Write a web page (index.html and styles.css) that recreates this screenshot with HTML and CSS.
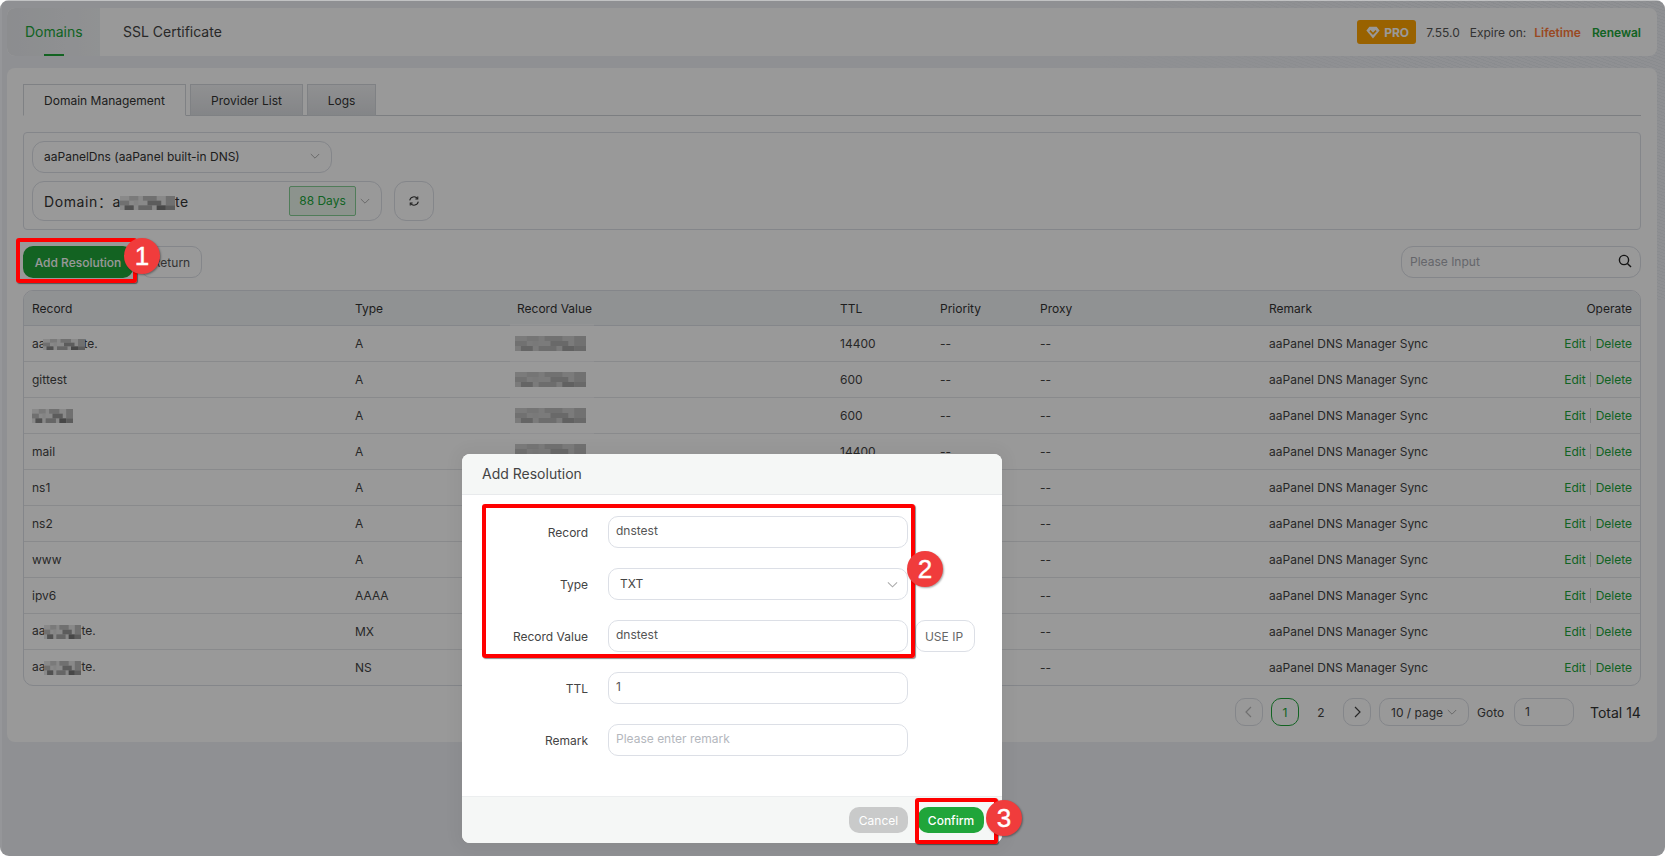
FILE: index.html
```html
<!DOCTYPE html>
<html lang="en">
<head>
<meta charset="utf-8">
<title>Domains</title>
<link rel="stylesheet" href="styles.css">
</head>
<body>
<svg class="defs" width="0" height="0" aria-hidden="true">
  <symbol id="mosaic" viewBox="0 0 12 3" preserveAspectRatio="none">
    <rect width="12" height="3" fill="#e4e4e4"/>
    <rect x="0" y="1" width="2" height="1" fill="#bbb"/><rect x="1" y="2" width="2" height="1" fill="#888"/>
    <rect x="2" y="0" width="2" height="1" fill="#ccc"/><rect x="4" y="2" width="3" height="1" fill="#aaa"/>
    <rect x="5" y="0" width="3" height="1" fill="#bbb"/><rect x="6" y="1" width="3" height="1" fill="#999"/>
    <rect x="8" y="2" width="2" height="1" fill="#777"/><rect x="10" y="0" width="2" height="2" fill="#bbb"/>
    <rect x="10" y="2" width="2" height="1" fill="#999"/><rect x="3" y="1" width="1" height="1" fill="#ddd"/>
  </symbol>
  <symbol id="chev" viewBox="0 0 12 12"><path d="M1 3.6 6 8.6 11 3.6" fill="none" stroke="currentColor" stroke-width="1.1"/></symbol>
</svg>

<div class="screen">
  <header class="topbar">
    <nav class="toptabs">
      <a class="toptab active">Domains</a>
      <a class="toptab">SSL Certificate</a>
    </nav>
    <div class="topinfo">
      <span class="pro">
        <svg width="14" height="13" viewBox="0 0 14 13"><path d="M3.4.8h7.2L13.6 4.4 7 12.4.4 4.4z" fill="#fff"/><path d="M3.9 4.6 7 7.8l3.1-3.2" fill="none" stroke="#ffa300" stroke-width="1.6"/></svg>
        PRO
      </span>
      <span class="ver">7.55.0</span>
      <span class="exp">Expire on:</span>
      <span class="life">Lifetime</span>
      <span class="renew">Renewal</span>
    </div>
  </header>

  <main class="card">
    <div class="tabs">
      <a class="tab active">Domain Management</a>
      <a class="tab">Provider List</a>
      <a class="tab">Logs</a>
    </div>

    <section class="filter">
      <div class="select provider"><span>aaPanelDns (aaPanel built-in DNS)</span><svg class="chev"><use href="#chev"/></svg></div>
      <div class="domrow">
        <div class="select domain">
          <span class="domtext">Domain：a<svg class="mos dommos"><use href="#mosaic"/></svg>te</span>
          <span class="days">88 Days</span>
          <svg class="chev"><use href="#chev"/></svg>
        </div>
        <button class="refresh" type="button">
          <svg width="12" height="12" viewBox="0 0 14 14" fill="none" stroke="#333" stroke-width="1.2"><path d="M2 6.2A5 5 0 0 1 11 4.2"/><path d="M12 7.8A5 5 0 0 1 3 9.8"/><path d="M11.4 1.8v2.8H8.6"/><path d="M2.6 12.2V9.4h2.8"/></svg>
        </button>
      </div>
    </section>

    <section class="toolbar">
      <div class="btns">
        <button class="btn primary" type="button">Add Resolution</button>
        <button class="btn ghost" type="button">Return</button>
      </div>
      <div class="search"><span>Please Input</span>
        <svg width="14" height="14" viewBox="0 0 14 14" fill="none" stroke="#222" stroke-width="1.4"><circle cx="6" cy="6" r="4.6"/><path d="M9.4 9.4 13 13"/></svg>
      </div>
    </section>

    <div class="tablewrap">
      <table class="records">
        <thead>
          <tr><th>Record</th><th>Type</th><th>Record Value</th><th>TTL</th><th>Priority</th><th>Proxy</th><th>Remark</th><th class="op">Operate</th></tr>
        </thead>
        <tbody>
          <tr><td>aa<svg class="mos m1"><use href="#mosaic"/></svg>te.</td><td>A</td><td><svg class="mos val"><use href="#mosaic"/></svg></td><td>14400</td><td>--</td><td>--</td><td>aaPanel DNS Manager Sync</td><td class="op"><a>Edit</a><i></i><a>Delete</a></td></tr>
          <tr><td>gittest</td><td>A</td><td><svg class="mos val"><use href="#mosaic"/></svg></td><td>600</td><td>--</td><td>--</td><td>aaPanel DNS Manager Sync</td><td class="op"><a>Edit</a><i></i><a>Delete</a></td></tr>
          <tr><td><svg class="mos m3"><use href="#mosaic"/></svg></td><td>A</td><td><svg class="mos val"><use href="#mosaic"/></svg></td><td>600</td><td>--</td><td>--</td><td>aaPanel DNS Manager Sync</td><td class="op"><a>Edit</a><i></i><a>Delete</a></td></tr>
          <tr><td>mail</td><td>A</td><td><svg class="mos val"><use href="#mosaic"/></svg></td><td>14400</td><td>--</td><td>--</td><td>aaPanel DNS Manager Sync</td><td class="op"><a>Edit</a><i></i><a>Delete</a></td></tr>
          <tr><td>ns1</td><td>A</td><td></td><td></td><td>--</td><td>--</td><td>aaPanel DNS Manager Sync</td><td class="op"><a>Edit</a><i></i><a>Delete</a></td></tr>
          <tr><td>ns2</td><td>A</td><td></td><td></td><td>--</td><td>--</td><td>aaPanel DNS Manager Sync</td><td class="op"><a>Edit</a><i></i><a>Delete</a></td></tr>
          <tr><td>www</td><td>A</td><td></td><td></td><td>--</td><td>--</td><td>aaPanel DNS Manager Sync</td><td class="op"><a>Edit</a><i></i><a>Delete</a></td></tr>
          <tr><td>ipv6</td><td>AAAA</td><td></td><td></td><td>--</td><td>--</td><td>aaPanel DNS Manager Sync</td><td class="op"><a>Edit</a><i></i><a>Delete</a></td></tr>
          <tr><td>aa<svg class="mos m9"><use href="#mosaic"/></svg>te.</td><td>MX</td><td></td><td></td><td>--</td><td>--</td><td>aaPanel DNS Manager Sync</td><td class="op"><a>Edit</a><i></i><a>Delete</a></td></tr>
          <tr><td>aa<svg class="mos m9"><use href="#mosaic"/></svg>te.</td><td>NS</td><td></td><td></td><td>--</td><td>--</td><td>aaPanel DNS Manager Sync</td><td class="op"><a>Edit</a><i></i><a>Delete</a></td></tr>
        </tbody>
      </table>
      <div class="valband"></div>
    </div>

    <footer class="pager">
      <span class="pg disabled"><svg width="10" height="12" viewBox="0 0 10 12" fill="none" stroke="currentColor" stroke-width="1.2"><path d="M7 1 2 6l5 5"/></svg></span>
      <span class="pg current">1</span>
      <span class="pg plain">2</span>
      <span class="pg"><svg width="10" height="12" viewBox="0 0 10 12" fill="none" stroke="currentColor" stroke-width="1.2"><path d="M3 1l5 5-5 5"/></svg></span>
      <span class="sizes">10 / page<svg class="chev"><use href="#chev"/></svg></span>
      <span class="goto">Goto</span>
      <span class="gotoin">1</span>
      <span class="total">Total 14</span>
    </footer>
  </main>

  <div class="overlay"></div>

  <div class="modal">
    <div class="m-head">Add Resolution</div>
    <div class="m-body">
      <div class="row"><label>Record</label><div class="input">dnstest</div></div>
      <div class="row"><label>Type</label><div class="input sel">TXT<svg class="chev"><use href="#chev"/></svg></div></div>
      <div class="row"><label>Record Value</label><div class="input">dnstest</div><button class="useip" type="button">USE IP</button></div>
      <div class="row"><label>TTL</label><div class="input">1</div></div>
      <div class="row"><label>Remark</label><div class="input ph">Please enter remark</div></div>
    </div>
    <div class="m-foot">
      <button class="btn cancel" type="button">Cancel</button>
      <button class="btn confirm" type="button">Confirm</button>
    </div>
  </div>

  <div class="mark mark1"></div>
  <div class="mark mark2"></div>
  <div class="mark mark3"></div>
  <div class="badge b1">1</div>
  <div class="badge b2">2</div>
  <div class="badge b3">3</div>
</div>
</body>
</html>
```

FILE: styles.css
```css
* { box-sizing: border-box; }
html, body { margin: 0; padding: 0; height: 856px; background: #fff; overflow: hidden; }
body { font-family: Inter, "Noto Sans CJK SC", sans-serif; font-size: 12px; color: #333; }
.defs { position: absolute; }

.screen {
  position: relative;
  width: 1665px;
  height: 856px;
  padding: 8px 8px 0 7px;
  border-radius: 9px;
  overflow: hidden;
  display: flex;
  flex-direction: column;
  gap: 12px;
  background:
    linear-gradient(90deg, #eff1f5 0, rgba(239, 241, 245, 0) 70%) right top / 620px 300px no-repeat,
    repeating-linear-gradient(20deg, #e6e9ee 0 1px, #eff1f5 1px 3px) right top / 620px 300px no-repeat,
    #eff1f5;
}

/* top bar */
.topbar {
  height: 48px;
  flex: none;
  background: #fff;
  border-radius: 8px;
  display: flex;
  justify-content: space-between;
  align-items: center;
  padding-right: 16px;
  overflow: hidden;
}
.toptabs { display: flex; height: 100%; }
.toptab {
  font-size: 14px;
  line-height: 48px;
  padding: 0 24px;
  color: #444;
  position: relative;
}
.toptab.active {
  color: #20a53a;
  background: linear-gradient(90deg, #e9ebef, #f1f3f5);
  padding: 0 17px 0 18px;
  width: 93px;
  border-radius: 8px 0 0 8px;
}
.toptab.active::after {
  content: "";
  position: absolute;
  left: 37px;
  bottom: 0;
  width: 20px;
  height: 2px;
  background: #20a53a;
}
.toptab:nth-child(2) { padding-left: 23px; }
.topinfo { display: flex; align-items: center; font-size: 12px; color: #555; }
.pro {
  display: flex;
  align-items: center;
  gap: 4px;
  width: 59px;
  height: 24px;
  padding-left: 9px;
  background: #ffa300;
  border-radius: 3px;
  color: #fff;
  font-weight: 700;
  margin-right: 10px;
}
.ver { margin-right: 10px; }
.exp { margin-right: 8px; }
.life { color: #ff7a3a; font-weight: 600; margin-right: 11px; }
.renew { color: #20a53a; font-weight: 600; }

/* card */
.card {
  width: 1650px;
  height: 674px;
  flex: none;
  background: #fff;
  border-radius: 8px;
  padding: 16px;
  display: flex;
  flex-direction: column;
}
.tabs { display: flex; height: 32px; gap: 4px; border-bottom: 1px solid #cfd2d8; flex: none; }
.tab {
  height: 32px;
  border: 1px solid #d4d7dd;
  line-height: 32px;
  text-align: center;
  background: linear-gradient(#f0f1f3, #dcdee2);
  color: #333;
}
.tab:nth-child(1) { width: 163px; background: #fff; border-bottom-color: #fff; }
.tab:nth-child(2) { width: 113px; }
.tab:nth-child(3) { width: 69px; }

.filter {
  margin-top: 16px;
  height: 98px;
  flex: none;
  border: 1px solid #dcdfe6;
  border-radius: 4px;
  padding: 8px;
  display: flex;
  flex-direction: column;
  gap: 8px;
}
.select {
  border: 1px solid #dcdfe6;
  border-radius: 12px;
  display: flex;
  align-items: center;
}
.provider { width: 300px; height: 32px; padding: 0 11px 2px; justify-content: space-between; }
.chev { width: 10px; height: 10px; color: #aaa; flex: none; }
.domrow { display: flex; gap: 12px; }
.domain { width: 350px; height: 40px; padding: 0 11px 0 11px; }
.domtext { font-size: 14px; letter-spacing: .6px; color: #333; flex: 1; white-space: nowrap; }
.mos { display: inline-block; vertical-align: middle; filter: blur(.5px); }
.dommos { width: 55px; height: 14px; margin-left: -1px; }
.days {
  width: 67px;
  height: 30px;
  line-height: 28px;
  text-align: center;
  border: 1px solid #86cf95;
  border-radius: 2px;
  background: #e9f6ec;
  color: #20a53a;
  margin-right: 4px;
}
.refresh {
  width: 40px;
  height: 40px;
  padding: 0;
  background: #fff;
  border: 1px solid #dcdfe6;
  border-radius: 12px;
  display: flex;
  align-items: center;
  justify-content: center;
}

.toolbar { margin-top: 16px; height: 32px; flex: none; display: flex; justify-content: space-between; }
.btns { display: flex; gap: 8px; }
.btn { font-family: inherit; font-size: 12px; border-radius: 10px; border: 1px solid transparent; padding: 0; }
.primary { width: 110px; height: 32px; background: #20a53a; color: #fff; font-weight: 500; }
.ghost { width: 61px; height: 32px; background: #fff; border-color: #dcdfe6; color: #555; }
.search {
  width: 240px;
  height: 32px;
  border: 1px solid #dcdfe6;
  border-radius: 12px;
  display: flex;
  align-items: center;
  justify-content: space-between;
  padding: 0 8px 2px;
  color: #a8abb2;
}

.tablewrap {
  position: relative;
  margin-top: 12px;
  height: 396px;
  flex: none;
  border: 1px solid #dcdfe6;
  border-radius: 10px;
  overflow: hidden;
}
.valband {
  position: absolute;
  left: 486px;
  top: 33px;
  width: 84px;
  height: 131px;
  background: rgba(255, 255, 255, .45);
}
.records { width: 100%; table-layout: fixed; border-collapse: collapse; }
.records th {
  height: 34px;
  background: #f1f3f6;
  font-weight: 400;
  text-align: left;
  padding: 1px 8px 0;
  color: #333;
  border-bottom: 1px solid #dcdfe6;
}
.records td { height: 36px; padding: 0 8px; border-bottom: 1px solid #e4e6ea; white-space: nowrap; color: #444; }
.records tr:last-child td { border-bottom: 0; }
.records th:nth-child(1) { width: 323px; }
.records th:nth-child(2) { width: 162px; }
.records th:nth-child(3) { width: 323px; }
.records th:nth-child(4), .records th:nth-child(5) { width: 100px; }
.records th:nth-child(6) { width: 229px; }
.records th:nth-child(7) { width: 200px; }
.records .op { text-align: right; }
.records td.op { color: #20a53a; }
.op i { display: inline-block; width: 1px; height: 15px; background: #d0d2d6; margin: 0 5px 0 4px; vertical-align: -3px; }
.m1 { width: 42px; height: 11px; margin: 0 -2px 0 -2px; }
.m3 { width: 41px; height: 14px; }
.m9 { width: 37px; height: 14px; margin-left: -1px; }
.val { width: 71px; height: 15px; margin-left: -2px; filter: blur(.5px) brightness(.72); }

.pager { margin-top: 12px; display: flex; align-items: center; height: 28px; flex: none; color: #444; }
.pg {
  width: 28px;
  height: 28px;
  border: 1px solid #dcdfe6;
  border-radius: 10px;
  display: flex;
  align-items: center;
  justify-content: center;
  margin-right: 8px;
}
.pager .pg:first-child { margin-left: auto; }
.pg.disabled { color: #bbb; }
.pg.current { border-color: #20a53a; color: #20a53a; }
.pg.plain { border-color: transparent; }
.sizes {
  width: 90px;
  height: 28px;
  border: 1px solid #dcdfe6;
  border-radius: 10px;
  display: flex;
  align-items: center;
  justify-content: space-between;
  padding: 0 11px;
}
.goto { margin: 0 8px; width: 29px; white-space: nowrap; }
.gotoin {
  width: 60px;
  height: 28px;
  border: 1px solid #dcdfe6;
  border-radius: 10px;
  line-height: 26px;
  padding-left: 10px;
  margin-right: 16px;
}
.total { font-size: 14px; color: #333; width: 51px; white-space: nowrap; }

/* overlay layer */
.overlay {
  position: absolute;
  inset: 0;
  background: rgba(0, 0, 0, .4);
  box-shadow: inset 0 1px 0 rgba(255, 255, 255, .45), inset 2px 0 0 rgba(255, 255, 255, .06);
}

.modal {
  position: absolute;
  left: 462px;
  top: 454px;
  width: 540px;
  height: 389px;
  background: #fff;
  border-radius: 8px;
  overflow: hidden;
  display: flex;
  flex-direction: column;
  box-shadow: 0 0 14px 6px rgba(0, 0, 0, .04);
}
.m-head {
  height: 41px;
  flex: none;
  background: #f5f7f6;
  border-bottom: 1px solid #e8eaec;
  padding-left: 20px;
  line-height: 40px;
  font-size: 14px;
  color: #444;
}
.m-body { flex: 1; padding-top: 21px; display: flex; flex-direction: column; gap: 20px; }
.row { display: flex; align-items: center; height: 32px; }
.row label { width: 126px; text-align: right; margin-right: 20px; color: #444; }
.input {
  width: 300px;
  height: 32px;
  border: 1px solid #dcdfe6;
  border-radius: 10px;
  padding: 0 7px;
  line-height: 28px;
  color: #555;
}
.sel { padding: 0 9px 0 11px; display: flex; justify-content: space-between; align-items: center; color: #444; }
.sel .chev { width: 11px; height: 11px; }
.ph { color: #b4b7bd; }
.useip {
  width: 60px;
  height: 32px;
  margin-left: 7px;
  font-family: inherit;
  font-size: 12px;
  color: #666;
  background: #fff;
  border: 1px solid #dcdfe6;
  border-radius: 10px;
  padding: 0 2px 0 0;
}
.m-foot {
  height: 47px;
  flex: none;
  background: #f5f7f6;
  border-top: 1px solid #eceeef;
  display: flex;
  justify-content: flex-end;
  gap: 10px;
  padding: 10px 18px 0 0;
}
.cancel { width: 59px; height: 26px; background: #c9caca; color: #fff; }
.confirm { width: 66px; height: 26px; background: #20a53a; color: #fff; font-weight: 500; }

/* annotations */
.mark { position: absolute; border: 4px solid #f00; border-radius: 3px; box-shadow: 1px 1px 1px rgba(0, 0, 0, .45); }
.mark1 { left: 16px; top: 238px; width: 121px; height: 45px; }
.mark2 { left: 482px; top: 504px; width: 433px; height: 154px; }
.mark3 { left: 915px; top: 798px; width: 83px; height: 46px; }
.badge {
  position: absolute;
  width: 36px;
  height: 36px;
  border-radius: 50%;
  background: #f03c3c;
  color: #fff;
  font: 400 26px/36px "Liberation Sans", sans-serif;
  -webkit-text-stroke: .4px #fff;
  text-align: center;
  box-shadow: 1px 1px 2px rgba(0, 0, 0, .35);
}
.b1 { left: 124px; top: 238px; }
.b2 { left: 907px; top: 551px; }
.b3 { left: 986px; top: 800px; }
```
